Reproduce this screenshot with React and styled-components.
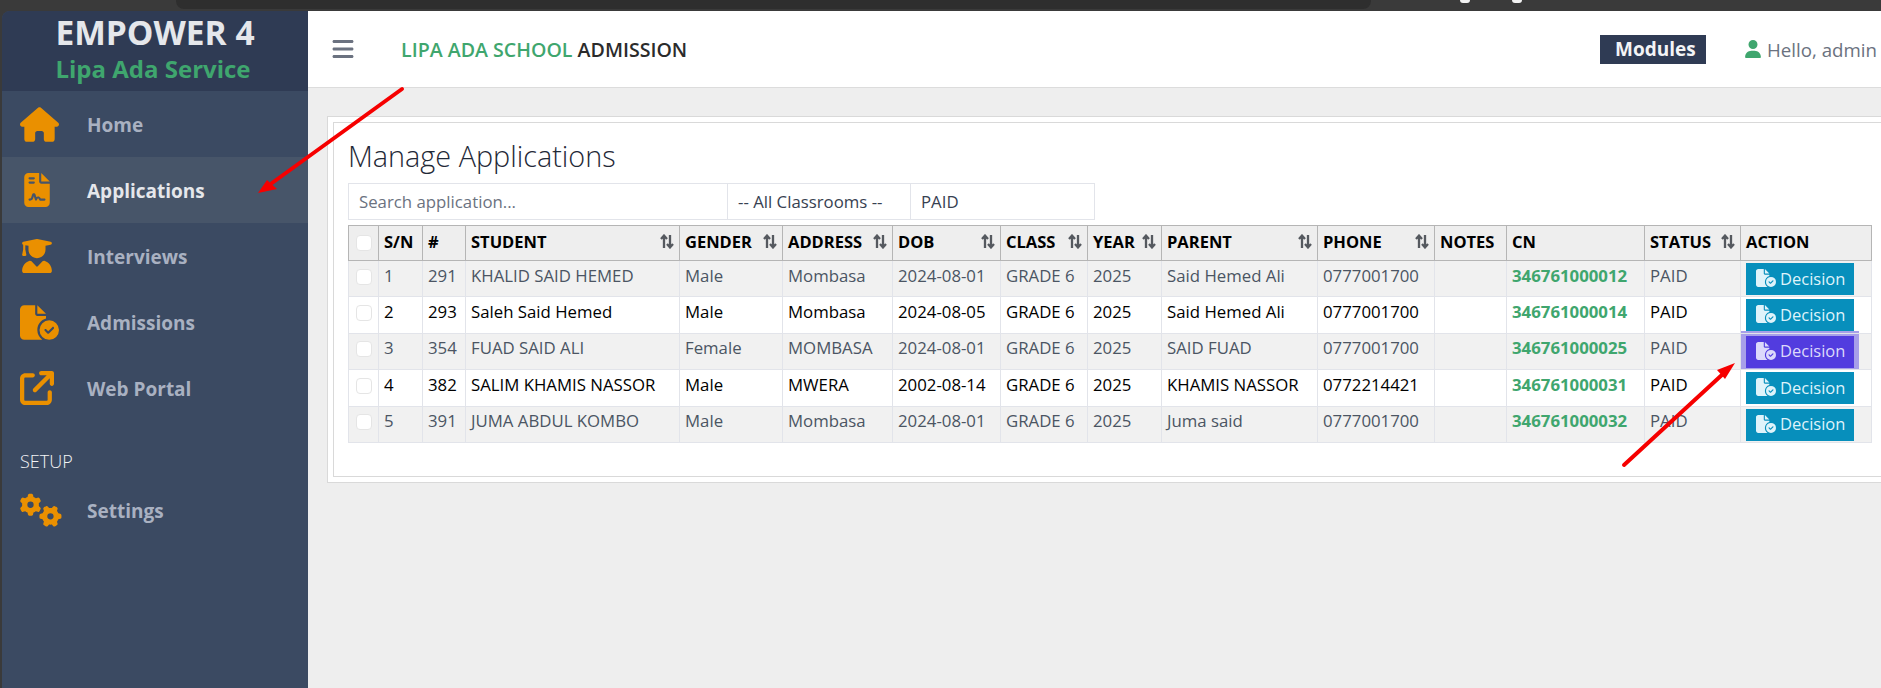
import React from 'react';
import styled, { createGlobalStyle } from 'styled-components';
import {
  FaHouse,
  FaFileContract,
  FaUserGraduate,
  FaFileCircleCheck,
  FaArrowUpRightFromSquare,
  FaGears,
  FaBars,
  FaUser,
} from 'react-icons/fa6';

const GlobalStyle = createGlobalStyle`
  html, body {
    margin: 0;
    padding: 0;
    height: 100%;
    background: #3a3a3a;
    font-family: 'Open Sans', 'Liberation Sans', sans-serif;
    overflow: hidden;
  }
  * {
    box-sizing: border-box;
  }
`;

const Page = styled.div`
  position: relative;
  width: 1881px;
  height: 688px;
  display: flex;
  flex-direction: column;
  overflow: hidden;
`;

const BrowserStrip = styled.div`
  height: 11px;
  flex: none;
  display: flex;
  background: #3a3a3a;
  padding-left: 176px;
`;

const BrowserTab = styled.div`
  width: 1195px;
  height: 9px;
  background: #2e2e2e;
  border-radius: 0 0 8px 8px;
`;

const BrowserDots = styled.div`
  display: flex;
  gap: 42px;
  margin-left: 89px;
`;

const BrowserDot = styled.span`
  width: 10px;
  height: 3px;
  background: #f2f2f2;
  border-radius: 0 0 5px 5px;
`;

const Shell = styled.div`
  flex: 1;
  display: flex;
  min-height: 0;
  padding-left: 2px;
`;

const Sidebar = styled.aside`
  width: 306px;
  flex: none;
  background: #3b4a62;
  border-top-left-radius: 8px;
`;

const Brand = styled.div`
  height: 80px;
  background: #2f3b54;
  border-top-left-radius: 8px;
  display: flex;
  flex-direction: column;
  align-items: center;
  font-weight: 700;
`;

const BrandName = styled.div`
  font-size: 33.5px;
  line-height: 40px;
  margin-top: 1px;
  color: #e5e7eb;
`;

const BrandService = styled.div`
  font-size: 24px;
  line-height: 34px;
  margin-right: 4px;
  color: #3fa66e;
`;

const NavItem = styled.div`
  height: 66px;
  display: flex;
  align-items: center;
  padding-left: 18px;
  background: ${p => (p.$active ? '#475569' : 'transparent')};
  color: ${p => (p.$active ? '#e5e7eb' : '#a9b1c1')};
  font-size: 19px;
  font-weight: 700;
`;

const NavIcon = styled.span`
  width: 67px;
  flex: none;
  display: flex;
  align-items: center;
  color: #ea9000;
  font-size: ${p => p.$size}px;
`;

const NavLabel = styled.span`
  padding-top: 1px;
`;

const NavSection = styled.div`
  padding: 28px 18px 0;
  margin-bottom: 4px;
  font-size: 18px;
  line-height: 24px;
  font-weight: 300;
  color: #f3f4f6;
`;

const Content = styled.main`
  flex: 1;
  min-width: 0;
  display: flex;
  flex-direction: column;
  background: #eeeeee;
  overflow: hidden;
`;

const Topbar = styled.header`
  height: 77px;
  flex: none;
  display: flex;
  align-items: center;
  background: #fff;
  border-bottom: 1px solid #dcdcdc;
  padding-left: 23px;
`;

const Burger = styled.span`
  display: flex;
  color: #6b7280;
  font-size: 24px;
  margin-right: 46px;
`;

const AppTitle = styled.div`
  font-size: 19.6px;
  font-weight: 600;
  color: #2b2b2b;
`;

const Green = styled.span`
  color: #3fa66e;
`;

const TopRight = styled.div`
  margin-left: auto;
  display: flex;
  align-items: center;
`;

const ModulesButton = styled.div`
  width: 106px;
  height: 29px;
  background: #2f3b54;
  color: #f3f4f6;
  font-size: 19px;
  font-weight: 700;
  display: flex;
  align-items: center;
  padding-left: 15px;
  margin-right: 38px;
`;

const UserGreeting = styled.div`
  width: 137px;
  display: flex;
  align-items: center;
  gap: 5px;
  color: #6b7280;
  font-size: 18.7px;
  white-space: nowrap;
`;

const UserIcon = styled.span`
  display: flex;
  color: #3fa66e;
  font-size: 18px;
`;

const Body = styled.div`
  padding: 28px 0 0 19px;
`;

const OuterCard = styled.section`
  width: 1600px;
  background: #fff;
  border: 1px solid #d9d9d9;
  padding: 5px;
`;

const InnerCard = styled.div`
  border: 1px solid #d9d9d9;
  padding: 14px 14px 33px;
`;

const Title = styled.h1`
  margin: 0 0 8px;
  font-size: 28.8px;
  line-height: 38px;
  font-weight: 300;
  color: #1f2937;
`;

const FilterBar = styled.div`
  width: 747px;
  height: 37px;
  display: flex;
  border: 1px solid #e2e4ea;
  margin-bottom: 5px;
`;

const FilterCell = styled.div`
  width: ${p => p.$w}px;
  flex: ${p => (p.$w ? 'none' : 1)};
  display: flex;
  align-items: center;
  padding-left: 10px;
  font-size: 16.8px;
  color: ${p => (p.$muted ? '#6b7280' : '#374151')};
  border-right: ${p => (p.$last ? 'none' : '1px solid #e2e4ea')};
`;

const Table = styled.table`
  width: 1523px;
  table-layout: fixed;
  border-collapse: collapse;
  font-size: 16.8px;
`;

const HeadCell = styled.th`
  height: 35px;
  padding: 0 5px 3px;
  background: #eeeeee;
  border: 1px solid #b5b5b5;
  text-align: left;
  font-weight: 700;
  font-size: 16.5px;
  color: #000;
  white-space: nowrap;
`;

const HeadInner = styled.div`
  display: flex;
  align-items: center;
  justify-content: space-between;
`;

const Row = styled.tr`
  height: 36.4px;
  background: ${p => (p.$odd ? '#f1f1f1' : '#fff')};
  color: ${p => (p.$odd ? '#4b5563' : '#000')};
`;

const Cell = styled.td`
  padding: 2.6px 5px 0;
  border: 1px solid #e2e4ea;
  vertical-align: top;
  line-height: 24px;
  white-space: nowrap;
  overflow: hidden;
`;

const ActionCell = styled(Cell)`
  padding: 2px 5px 0;
  line-height: 0;
  overflow: visible;
`;

const CheckBox = styled.input.attrs({ type: 'checkbox' })`
  appearance: none;
  display: block;
  width: 16px;
  height: 16px;
  margin: ${p => (p.$head ? '3px 0 0 2px' : '5px 0 0 2px')};
  background: #fff;
  border: 1px solid #e5e5e5;
  border-radius: 4px;
`;

const CnValue = styled.span`
  color: #3fa66e;
  font-weight: 700;
`;

const DecisionButton = styled.button`
  width: 108px;
  height: 32px;
  padding: 0 0 2px 10px;
  display: flex;
  align-items: center;
  gap: 4px;
  border: 0;
  border-radius: 0;
  font-family: inherit;
  font-size: 16.5px;
  color: ${p => (p.$focused ? '#dcd9fb' : '#dff3fa')};
  background: ${p => (p.$focused ? '#523cdf' : '#078fbc')};
  box-shadow: ${p => (p.$focused ? '0 0 0 5px #a79fe9' : 'none')};
`;

const ButtonIcon = styled(FaFileCircleCheck)`
  font-size: 20px;
  flex: none;
`;

const ArrowLayer = styled.svg`
  position: absolute;
  top: 0;
  left: 0;
  pointer-events: none;
`;

const SortIcon = () => (
  <svg width="14" height="15" viewBox="0 0 14 15" fill="none" stroke="#55595f" strokeWidth="2.3">
    <path d="M4 14V2M1 5l3-3.4L7 5" />
    <path d="M10 1v12M7 10l3 3.4 3-3.4" />
  </svg>
);

const columns = [
  { key: 'check', width: 30 },
  { key: 'sn', label: 'S/N', width: 44 },
  { key: 'id', label: '#', width: 43 },
  { key: 'student', label: 'STUDENT', width: 214, sort: true },
  { key: 'gender', label: 'GENDER', width: 103, sort: true },
  { key: 'address', label: 'ADDRESS', width: 110, sort: true },
  { key: 'dob', label: 'DOB', width: 108, sort: true },
  { key: 'class', label: 'CLASS', width: 87, sort: true },
  { key: 'year', label: 'YEAR', width: 74, sort: true },
  { key: 'parent', label: 'PARENT', width: 156, sort: true },
  { key: 'phone', label: 'PHONE', width: 117, sort: true },
  { key: 'notes', label: 'NOTES', width: 72 },
  { key: 'cn', label: 'CN', width: 138 },
  { key: 'status', label: 'STATUS', width: 96, sort: true },
  { key: 'action', label: 'ACTION', width: 131 },
];

const rows = [
  { sn: 1, id: 291, student: 'KHALID SAID HEMED', gender: 'Male', address: 'Mombasa', dob: '2024-08-01', parent: 'Said Hemed Ali', phone: '0777001700', cn: '346761000012' },
  { sn: 2, id: 293, student: 'Saleh Said Hemed', gender: 'Male', address: 'Mombasa', dob: '2024-08-05', parent: 'Said Hemed Ali', phone: '0777001700', cn: '346761000014' },
  { sn: 3, id: 354, student: 'FUAD SAID ALI', gender: 'Female', address: 'MOMBASA', dob: '2024-08-01', parent: 'SAID FUAD', phone: '0777001700', cn: '346761000025', focused: true },
  { sn: 4, id: 382, student: 'SALIM KHAMIS NASSOR', gender: 'Male', address: 'MWERA', dob: '2002-08-14', parent: 'KHAMIS NASSOR', phone: '0772214421', cn: '346761000031' },
  { sn: 5, id: 391, student: 'JUMA ABDUL KOMBO', gender: 'Male', address: 'Mombasa', dob: '2024-08-01', parent: 'Juma said', phone: '0777001700', cn: '346761000032' },
];

const navItems = [
  { label: 'Home', icon: <FaHouse />, size: 39 },
  { label: 'Applications', icon: <FaFileContract />, size: 34, active: true },
  { label: 'Interviews', icon: <FaUserGraduate />, size: 34 },
  { label: 'Admissions', icon: <FaFileCircleCheck />, size: 39 },
  { label: 'Web Portal', icon: <FaArrowUpRightFromSquare />, size: 34 },
];

const App = () => (
  <Page>
    <GlobalStyle />
    <BrowserStrip>
      <BrowserTab />
      <BrowserDots>
        <BrowserDot />
        <BrowserDot />
      </BrowserDots>
    </BrowserStrip>
    <Shell>
      <Sidebar>
        <Brand>
          <BrandName>EMPOWER 4</BrandName>
          <BrandService>Lipa Ada Service</BrandService>
        </Brand>
        {navItems.map(item => (
          <NavItem key={item.label} $active={item.active}>
            <NavIcon $size={item.size}>{item.icon}</NavIcon>
            <NavLabel>{item.label}</NavLabel>
          </NavItem>
        ))}
        <NavSection>SETUP</NavSection>
        <NavItem>
          <NavIcon $size={42}>
            <FaGears />
          </NavIcon>
          <NavLabel>Settings</NavLabel>
        </NavItem>
      </Sidebar>
      <Content>
        <Topbar>
          <Burger>
            <FaBars />
          </Burger>
          <AppTitle>
            <Green>LIPA ADA SCHOOL</Green> ADMISSION
          </AppTitle>
          <TopRight>
            <ModulesButton>Modules</ModulesButton>
            <UserGreeting>
              <UserIcon>
                <FaUser />
              </UserIcon>
              Hello, admin
            </UserGreeting>
          </TopRight>
        </Topbar>
        <Body>
          <OuterCard>
            <InnerCard>
              <Title>Manage Applications</Title>
              <FilterBar>
                <FilterCell $w={379} $muted>Search application...</FilterCell>
                <FilterCell $w={183}>-- All Classrooms --</FilterCell>
                <FilterCell $last>PAID</FilterCell>
              </FilterBar>
              <Table>
                <colgroup>
                  {columns.map(col => (
                    <col key={col.key} width={col.width} />
                  ))}
                </colgroup>
                <thead>
                  <tr>
                    {columns.map(col => (
                      <HeadCell key={col.key}>
                        {col.key === 'check' ? (
                          <CheckBox $head />
                        ) : (
                          <HeadInner>
                            {col.label}
                            {col.sort && <SortIcon />}
                          </HeadInner>
                        )}
                      </HeadCell>
                    ))}
                  </tr>
                </thead>
                <tbody>
                  {rows.map((row, i) => (
                    <Row key={row.id} $odd={i % 2 === 0}>
                      <Cell><CheckBox /></Cell>
                      <Cell>{row.sn}</Cell>
                      <Cell>{row.id}</Cell>
                      <Cell>{row.student}</Cell>
                      <Cell>{row.gender}</Cell>
                      <Cell>{row.address}</Cell>
                      <Cell>{row.dob}</Cell>
                      <Cell>GRADE 6</Cell>
                      <Cell>2025</Cell>
                      <Cell>{row.parent}</Cell>
                      <Cell>{row.phone}</Cell>
                      <Cell />
                      <Cell><CnValue>{row.cn}</CnValue></Cell>
                      <Cell>PAID</Cell>
                      <ActionCell>
                        <DecisionButton $focused={row.focused}>
                          <ButtonIcon />
                          Decision
                        </DecisionButton>
                      </ActionCell>
                    </Row>
                  ))}
                </tbody>
              </Table>
            </InnerCard>
          </OuterCard>
        </Body>
      </Content>
    </Shell>
    <ArrowLayer width="1881" height="688" viewBox="0 0 1881 688">
      <line x1="402" y1="89" x2="272" y2="183" stroke="#f60000" strokeWidth="4" strokeLinecap="round" />
      <polygon points="258,193 267,180 277,189" fill="#f60000" />
      <line x1="1624" y1="465" x2="1724" y2="373" stroke="#f60000" strokeWidth="4" strokeLinecap="round" />
      <polygon points="1735,363 1717,370 1725,379" fill="#f60000" />
    </ArrowLayer>
  </Page>
);

export default App;
